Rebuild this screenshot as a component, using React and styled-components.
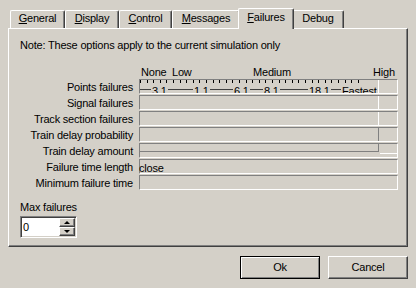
import React from "react";
import styled, { createGlobalStyle } from "styled-components";

const GlobalStyle = createGlobalStyle`
  html, body {
    margin: 0;
    padding: 0;
    background: #d4d0c8;
  }
  body {
    font-family: "Liberation Sans", Arial, sans-serif;
    font-size: 11px;
    line-height: 13px;
    letter-spacing: -0.2px;
    color: #000;
  }
`;

const tabs = [
    { label: "General", hot: true, w: 55 },
    { label: "Display", hot: true, w: 54 },
    { label: "Control", hot: true, w: 53 },
    { label: "Messages", hot: true, w: 68 },
    { label: "Failures", hot: true, w: 56, active: true },
    { label: "Debug", hot: false, w: 52 },
];

const rows = [
    { label: "Points failures", kind: "scale" },
    { label: "Signal failures", edge: "#ffffff" },
    { label: "Track section failures", edge: "#ffffff" },
    { label: "Train delay probability", edge: "#808080" },
    { label: "Train delay amount", kind: "amount" },
    { label: "Failure time length", text: "close" },
    { label: "Minimum failure time" },
];

const scaleTop = [
    { text: "None", x: 2 },
    { text: "Low", x: 33 },
    { text: "Medium", x: 114 },
    { text: "High", x: 234 },
];

const speeds = [
    { text: "3.1", x: 11 },
    { text: "1.1", x: 53 },
    { text: "6.1", x: 93 },
    { text: "8.1", x: 123 },
    { text: "18.1", x: 168 },
    { text: "Fastest", x: 201 },
];

const Ticks = () => {
    const marks = [];
    for (let k = 0; k <= 33; k++) {
        marks.push(<rect key={k} x={Math.round(k * 6.6)} y="0" width="1" height="3" fill="#000" />);
    }
    return (
        <TickSvg width="238" height="3" shapeRendering="crispEdges">
            {marks}
        </TickSvg>
    );
};

const Hot = ({ text, hot }) =>
    hot ? (
        <>
            <u>{text[0]}</u>
            {text.slice(1)}
        </>
    ) : (
        text
    );

const Field = ({ row }) => {
    if (row.kind === "scale") {
        return (
            <Box $clip>
                <Segment $edge="#ffffff">
                    <Ticks />
                    <Rail />
                    {speeds.map((s) => (
                        <Speed key={s.text} $x={s.x}>{s.text}</Speed>
                    ))}
                </Segment>
            </Box>
        );
    }
    if (row.kind === "amount") {
        return (
            <Box>
                <Segment $edge="#808080" $h={8} $under="#808080" />
                <Rest $under="#ffffff" />
            </Box>
        );
    }
    return (
        <Box>
            {row.edge && <Segment $edge={row.edge} />}
            {row.text && <BoxText>{row.text}</BoxText>}
        </Box>
    );
};

const App = () => {
    return (
        <>
            <GlobalStyle />
            <Dialog>
                <TabStrip>
                    {tabs.map((t) => (
                        <Tab key={t.label} $w={t.w} $active={t.active}>
                            <Hot text={t.label} hot={t.hot} />
                        </Tab>
                    ))}
                </TabStrip>
                <Panel>
                    <Note>Note: These options apply to the current simulation only</Note>
                    <Scale>
                        {scaleTop.map((s) => (
                            <ScaleLabel key={s.text} $x={s.x}>{s.text}</ScaleLabel>
                        ))}
                    </Scale>
                    <Grid>
                        {rows.map((r) => (
                            <React.Fragment key={r.label}>
                                <Label>{r.label}</Label>
                                <Field row={r} />
                            </React.Fragment>
                        ))}
                    </Grid>
                    <MaxLabel>Max failures</MaxLabel>
                    <Spinner>
                        <SpinValue>0</SpinValue>
                        <SpinButtons>
                            <SpinButton><Arrow $up /></SpinButton>
                            <SpinButton><Arrow /></SpinButton>
                        </SpinButtons>
                    </Spinner>
                </Panel>
                <ButtonRow>
                    <Button $default>Ok</Button>
                    <Button>Cancel</Button>
                </ButtonRow>
            </Dialog>
        </>
    );
};

const Dialog = styled.div`
    width: 416px;
    height: 288px;
    padding-top: 8px;
    box-sizing: border-box;
    background: #d4d0c8;
    overflow: hidden;
`;

const TabStrip = styled.div`
    display: flex;
    align-items: flex-end;
    height: 20px;
    padding-left: 10px;
`;

const Tab = styled.div`
    position: relative;
    z-index: ${(p) => (p.$active ? 2 : 0)};
    box-sizing: border-box;
    flex: 0 0 ${(p) => p.$w}px;
    height: ${(p) => (p.$active ? 21 : 18)}px;
    margin: ${(p) => (p.$active ? "0 -2px -1px" : "0")};
    padding-top: ${(p) => (p.$active ? 2 : 1)}px;
    text-align: center;
    background: #d4d0c8;
    border-top: 1px solid #ffffff;
    border-left: 1px solid #ffffff;
    border-right: 1px solid #404040;
    border-radius: 2px 2px 0 0;
    box-shadow: inset -1px 0 #808080;
    white-space: nowrap;
`;

const Panel = styled.div`
    position: relative;
    z-index: 1;
    box-sizing: border-box;
    height: 219px;
    margin: 0 8px;
    border-top: 1px solid #ffffff;
    border-left: 1px solid #ffffff;
    border-right: 1px solid #404040;
    border-bottom: 1px solid #404040;
    box-shadow: inset -1px -1px #808080;
    display: flex;
    flex-direction: column;
    align-items: flex-start;
`;

const Note = styled.div`
    margin-top: 10px;
    padding-left: 11px;
`;

const Scale = styled.div`
    position: relative;
    width: 259px;
    height: 13px;
    margin: 14px 0 0 130px;
`;

const ScaleLabel = styled.span`
    position: absolute;
    top: 0;
    left: ${(p) => p.$x}px;
`;

const Grid = styled.div`
    display: grid;
    grid-template-columns: 124px 259px;
    grid-auto-rows: 16px;
    column-gap: 6px;
`;

const Label = styled.div`
    text-align: right;
    line-height: 16px;
    white-space: nowrap;
`;

const Box = styled.div`
    display: flex;
    align-items: flex-start;
    height: 15px;
    box-sizing: border-box;
    border-top: 1px solid #808080;
    border-left: 1px solid #808080;
    border-right: 1px solid #ffffff;
    border-bottom: 1px solid #ffffff;
    overflow: ${(p) => (p.$clip ? "hidden" : "visible")};
`;

const Segment = styled.div`
    position: relative;
    flex: 0 0 239px;
    box-sizing: border-box;
    height: ${(p) => (p.$h ? `${p.$h}px` : "100%")};
    border-right: 1px solid ${(p) => p.$edge};
    border-bottom: ${(p) => (p.$under ? `1px solid ${p.$under}` : "none")};
`;

const Rest = styled.div`
    flex: 1;
    height: 9px;
    margin-left: 1px;
    border-bottom: 1px solid ${(p) => p.$under};
`;

const TickSvg = styled.svg`
    position: absolute;
    top: 0;
    left: 0;
    display: block;
`;

const Rail = styled.div`
    position: absolute;
    top: 9px;
    left: 0;
    width: 236px;
    height: 1px;
    background: #404040;
`;

const Speed = styled.span`
    position: absolute;
    top: 5px;
    left: ${(p) => p.$x}px;
    padding: 0 1px;
    background: #d4d0c8;
`;

const BoxText = styled.span`
    margin-left: -1px;
    line-height: 16px;
`;

const MaxLabel = styled.div`
    margin: 10px 0 0 11px;
`;

const Spinner = styled.div`
    display: flex;
    box-sizing: border-box;
    width: 57px;
    height: 22px;
    margin: 2px 0 0 11px;
    background: #ffffff;
    border-top: 1px solid #808080;
    border-left: 1px solid #808080;
    border-right: 1px solid #ffffff;
    border-bottom: 1px solid #ffffff;
    box-shadow: inset 1px 1px #404040, inset -1px -1px #d4d0c8;
    padding: 1px;
`;

const SpinValue = styled.div`
    flex: 1;
    padding-left: 1px;
    line-height: 18px;
`;

const SpinButtons = styled.div`
    display: flex;
    flex-direction: column;
    width: 16px;
`;

const SpinButton = styled.div`
    flex: 1;
    display: flex;
    align-items: center;
    justify-content: center;
    background: #d4d0c8;
    border-top: 1px solid #ffffff;
    border-left: 1px solid #ffffff;
    border-right: 1px solid #404040;
    border-bottom: 1px solid #404040;
    box-shadow: inset -1px -1px #808080;
`;

const Arrow = styled.span`
    width: 0;
    height: 0;
    border-left: 3px solid transparent;
    border-right: 3px solid transparent;
    border-bottom: ${(p) => (p.$up ? "3px solid #000" : "none")};
    border-top: ${(p) => (p.$up ? "none" : "3px solid #000")};
`;

const ButtonRow = styled.div`
    display: flex;
    justify-content: flex-end;
    gap: 8px;
    padding: 9px 8px 0 0;
`;

const Button = styled.div`
    box-sizing: border-box;
    width: 80px;
    height: 23px;
    display: flex;
    align-items: center;
    justify-content: center;
    background: #d4d0c8;
    border: 1px solid;
    border-color: ${(p) =>
        p.$default ? "#000000" : "#ffffff #404040 #404040 #ffffff"};
    box-shadow: ${(p) =>
        p.$default
            ? "inset 1px 1px #ffffff, inset -1px -1px #808080"
            : "inset -1px -1px #808080"};
`;

export default App;
